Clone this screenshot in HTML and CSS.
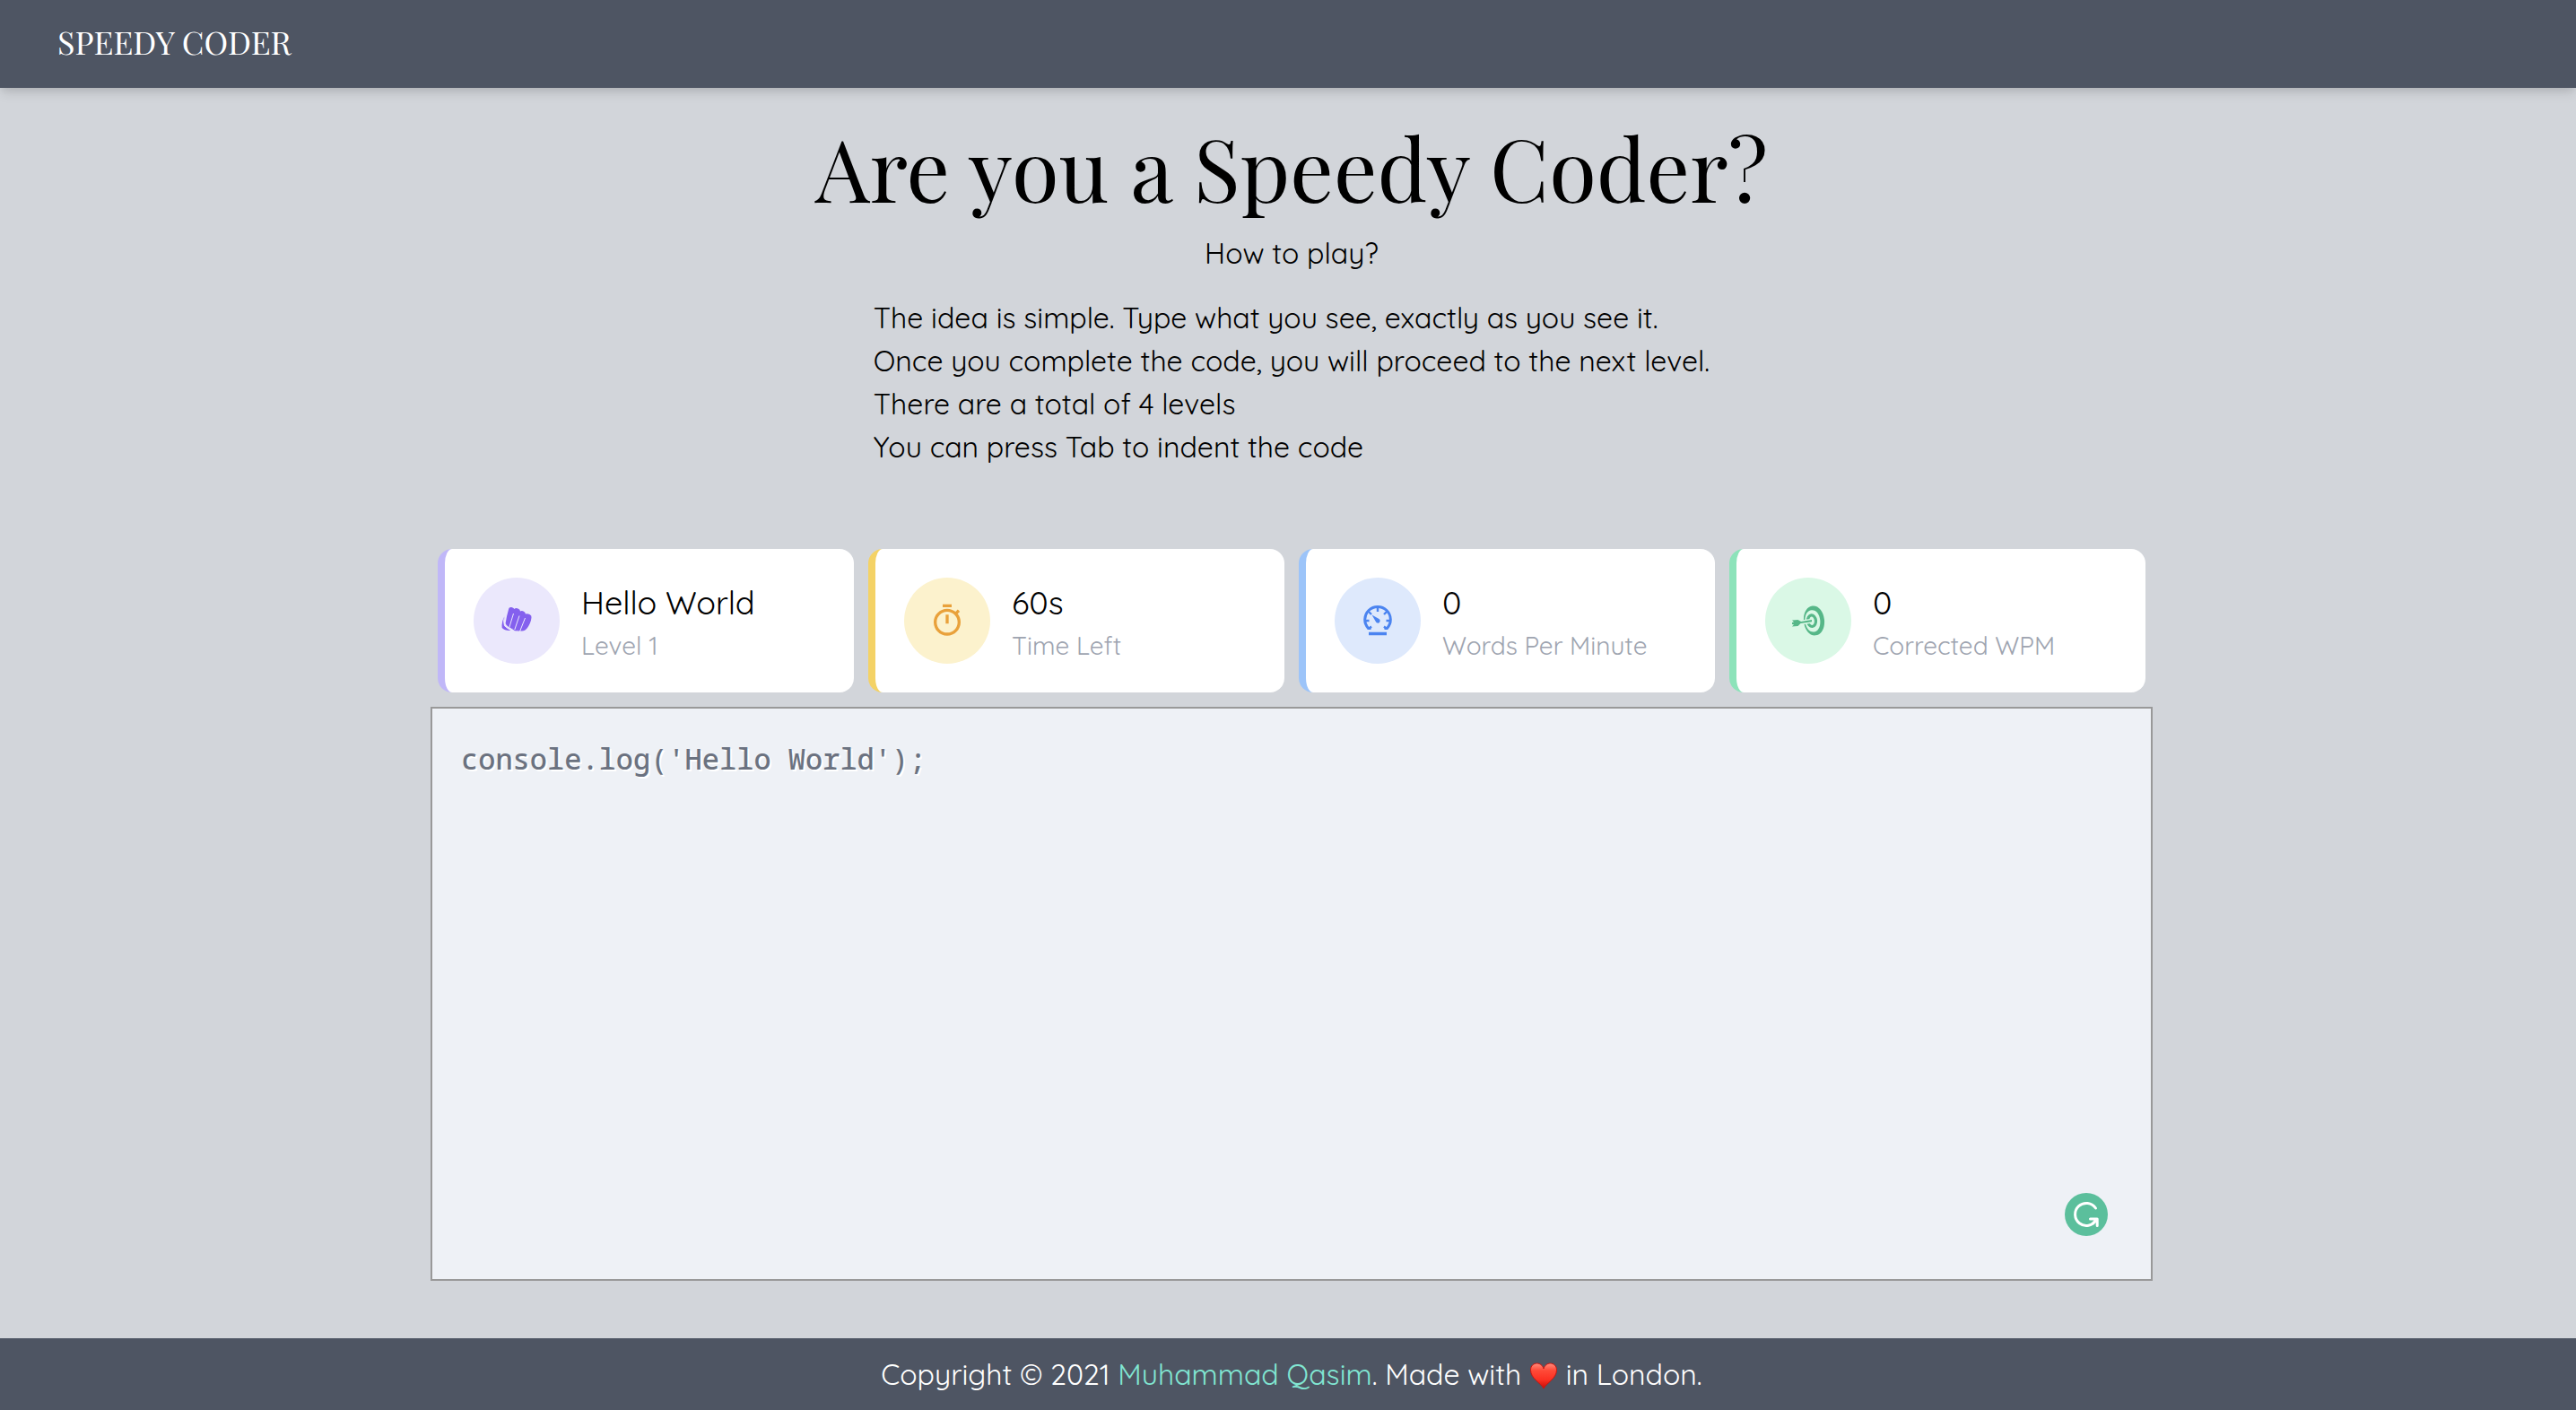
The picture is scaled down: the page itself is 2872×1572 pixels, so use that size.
FILE: index.html
```html
<!DOCTYPE html>
<html lang="en">
<head>
<meta charset="utf-8">
<meta name="viewport" content="width=device-width, initial-scale=1">
<title>Speedy Coder</title>
<link rel="stylesheet" href="styles.css">
</head>
<body>
<header class="navbar"><a class="brand" href="#">SPEEDY CODER</a></header>

<main class="content">
  <section class="intro">
    <h1 class="title">Are you a Speedy Coder?</h1>
    <p class="subtitle">How to play?</p>
    <ul class="rules">
      <li>The idea is simple. Type what you see, exactly as you see it.</li>
      <li>Once you complete the code, you will proceed to the next level.</li>
      <li>There are a total of 4 levels</li>
      <li>You can press Tab to indent the code</li>
    </ul>
  </section>

  <section class="stats">
    <article class="card card-purple">
      <span class="badge">
        <svg class="icon" viewBox="0 0 40 40" aria-hidden="true">
          <path fill="currentColor" d="M11 7.500C11.500 5 13 4.700 15 5.200Q17 5.600 17.300 7Q19 5.500 21.500 6.500Q24 7.300 24 9.500Q26 8.500 28 9.800Q30 11 29.800 12.500Q32 11.800 34.500 13Q37 14.300 36.500 16.500C36 21 34.500 24 32 28Q29 32 25 31.500L22 31L11 27Q8 25 7.600 23Q9 14 11 7.500Z"/>
          <path fill="currentColor" d="M7 14Q3 21 3.700 28Q7 31.400 13.500 30.800L6.500 26Q5 22 7 14Z"/>
          <path fill="currentColor" d="M11 26.500L24 31.500L18 31.200Z"/>
          <path class="icon-gap" d="M6.800 13Q4.600 21 6.400 25.500Q9.500 29 14 30.600M16.500 12L11.800 27.500M23 14.500L17.800 30M29.500 17L23.500 32"/>
        </svg>
      </span>
      <div class="card-text"><p class="card-value">Hello World</p><p class="card-label">Level 1</p></div>
    </article>
    <article class="card card-yellow">
      <span class="badge">
        <svg class="icon" viewBox="0 0 24 24" aria-hidden="true">
          <path fill="currentColor" d="M15 1H9v2h6V1zm-4 13h2V8h-2v6zm8.030-6.610l1.420-1.420c-.43-.51-.9-.99-1.410-1.410l-1.420 1.420C16.070 4.740 14.120 4 12 4c-4.970 0-9 4.030-9 9s4.020 9 9 9 9-4.030 9-9c0-2.120-.74-4.070-1.970-5.610zM12 20c-3.870 0-7-3.130-7-7s3.130-7 7-7 7 3.130 7 7-3.130 7-7 7z"/>
        </svg>
      </span>
      <div class="card-text"><p class="card-value">60s</p><p class="card-label">Time Left</p></div>
    </article>
    <article class="card card-blue">
      <span class="badge">
        <svg class="icon" viewBox="0 0 40 40" fill="none" stroke="currentColor" aria-hidden="true">
          <path stroke-width="3" d="M12.500 28.500H9.500A14.300 14.300 0 1 1 30.500 28.500H27.500"/>
          <path stroke-width="2.400" d="M20 5v5M5.500 20h5M29.500 20h5M10 10l3 3M30 10l-3 3M10 29l3-2.500M30 29l-3-2.500"/>
          <path stroke-width="3.500" d="M10 34.500h20"/>
          <path fill="currentColor" stroke="none" d="M13.500 13.500L21 17.800A2.500 2.500 0 1 1 17.800 21Z"/>
        </svg>
      </span>
      <div class="card-text"><p class="card-value">0</p><p class="card-label">Words Per Minute</p></div>
    </article>
    <article class="card card-green">
      <span class="badge">
        <svg class="icon" viewBox="0 0 40 40" aria-hidden="true">
          <g transform="rotate(-6 26 20)">
            <path fill="currentColor" fill-rule="evenodd" d="M26.500 3.500C33 3.500 38 10.500 38 20S33 36.500 26.500 36.500S15 29.500 15 20S20 3.500 26.500 3.500ZM25 8C20 8 16.500 13 16.500 20S20 32.500 25 32.500S33.300 27 33.300 20S30 8 25 8Z"/>
            <ellipse cx="24" cy="20" rx="4.500" ry="6.300" fill="none" stroke="currentColor" stroke-width="3.200"/>
          </g>
          <path class="icon-gap-wide" d="M12 22L22.500 20.500"/>
          <path fill="currentColor" d="M24 19v2.300l-12.500 1.600-3 3-6.500 .6 2-2.300-2-.3v-1.800l2-.5-2-2 6.500-.7 3.500 2.200z"/>
        </svg>
      </span>
      <div class="card-text"><p class="card-value">0</p><p class="card-label">Corrected WPM</p></div>
    </article>
  </section>

  <div class="editor">
    <textarea class="code" aria-label="Type the code" placeholder="console.log('Hello World');" spellcheck="false"></textarea>
    <button class="assistant" type="button" aria-label="Writing assistant">
      <svg viewBox="0 0 48 48" fill="none" stroke="#fff" stroke-width="3" stroke-linecap="round" stroke-linejoin="round" aria-hidden="true">
        <path d="M34.500 17A12.500 12.500 0 1 0 35 30"/><path d="M28.500 29H36.200V36.500M31.500 34L35 30"/>
      </svg>
    </button>
  </div>
</main>

<footer class="footer">
  <p>Copyright © 2021 <a class="author" href="#">Muhammad Qasim</a>. Made with
    <svg class="heart" viewBox="0 0 32 32" role="img" aria-label="love">
      <defs><linearGradient id="heart-fill" x1="0" y1="0" x2="0" y2="1"><stop offset="0" stop-color="#ff8d7d"/><stop offset=".28" stop-color="#ff4a38"/><stop offset=".65" stop-color="#fb3022"/><stop offset="1" stop-color="#c40d08"/></linearGradient></defs>
      <path fill="url(#heart-fill)" stroke="#c9150e" d="M16 30C13 24 1.500 19 1.500 9.500C1.500 4.500 5 2 8.700 2C12 2 15 4.500 16 8C17 4.500 20 2 23.300 2C27 2 30.500 4.500 30.500 9.500C30.500 19 19 24 16 30Z"/>
    </svg>
    in London.</p>
</footer>
</body>
</html>
```
FILE: styles.css
```css
* { box-sizing: border-box; }

body {
  margin: 0;
  min-height: 100vh;
  display: flex;
  flex-direction: column;
  background: #d2d5da;
  color: #000;
  font: 32px/48px Quicksand, Lato, sans-serif;
}

h1, p, ul { margin: 0; padding: 0; }
a { text-decoration: none; }

.navbar {
  padding: 22px 64px 28px;
  background: #4e5563;
  box-shadow: 0 8px 12px -2px rgba(0, 0, 0, .1), 0 4px 8px -2px rgba(0, 0, 0, .08);
}
.brand {
  display: block;
  color: #fff;
  font: 36px/48px "Playfair Display", "Liberation Serif", serif;
}

.content {
  flex: 1;
  display: flex;
  flex-direction: column;
  align-items: center;
  padding: 32px 0 64px 8px;
}
.intro {
  display: flex;
  flex-direction: column;
  align-items: center;
  margin-bottom: 90px;
}
.title {
  margin-bottom: 16px;
  font: 96px/112px "Playfair Display", "Liberation Serif", serif;
}
.subtitle { margin-bottom: 24px; }
.rules { list-style: none; }

.stats {
  width: 100%;
  max-width: 1920px;
  display: grid;
  grid-template-columns: repeat(4, 1fr);
  gap: 16px;
  padding: 0 8px;
  margin-bottom: 16px;
}
.card {
  display: flex;
  align-items: center;
  gap: 24px;
  padding: 32px;
  background: #fff;
  border-left: 8px solid;
  border-radius: 16px;
}
.card-purple { border-color: #c0b7f8; --tint: #ebe8fc; --ink: #8460ee; }
.card-yellow { border-color: #f4d266; --tint: #fcf2cd; --ink: #e9a13b; }
.card-blue { border-color: #9cc4f9; --tint: #dee9fc; --ink: #4b84f0; }
.card-green { border-color: #8de3ba; --tint: #daf8e6; --ink: #56b788; }
.badge {
  display: flex;
  align-items: center;
  justify-content: center;
  width: 96px;
  height: 96px;
  border-radius: 50%;
  background: var(--tint);
  color: var(--ink);
}
.icon { width: 40px; height: 40px; }
.icon-gap { fill: none; stroke: var(--tint); stroke-width: 1; }
.icon-gap-wide { fill: none; stroke: var(--tint); stroke-width: 5; }
.card-value { font-size: 36px; line-height: 56px; }
.card-label { color: #9ea4b0; font-size: 28px; line-height: 40px; }

.editor {
  position: relative;
  width: 100%;
  max-width: 1920px;
  flex: 1;
  display: flex;
}
.code {
  flex: 1;
  padding: 32px;
  border: 2px solid #999;
  border-radius: 0;
  outline: 0;
  resize: none;
  background: #eef1f6;
  color: #000;
  font: 500 32px/48px "Noto Sans Mono", "DejaVu Sans Mono", monospace;
  text-shadow: 2px 2px 0 #fff;
}
.code::placeholder { color: #6b7280; opacity: 1; }
.assistant {
  position: absolute;
  right: 50px;
  bottom: 50px;
  width: 48px;
  height: 48px;
  padding: 0;
  border: 0;
  border-radius: 50%;
  background: #5bbf9c;
}
.assistant svg { display: block; }

.footer {
  padding: 16px 0 16px 8px;
  background: #4e5563;
  color: #fff;
  text-align: center;
}
.author { color: #81e6d2; }
.heart { width: 32px; height: 32px; vertical-align: -6px; }
```
